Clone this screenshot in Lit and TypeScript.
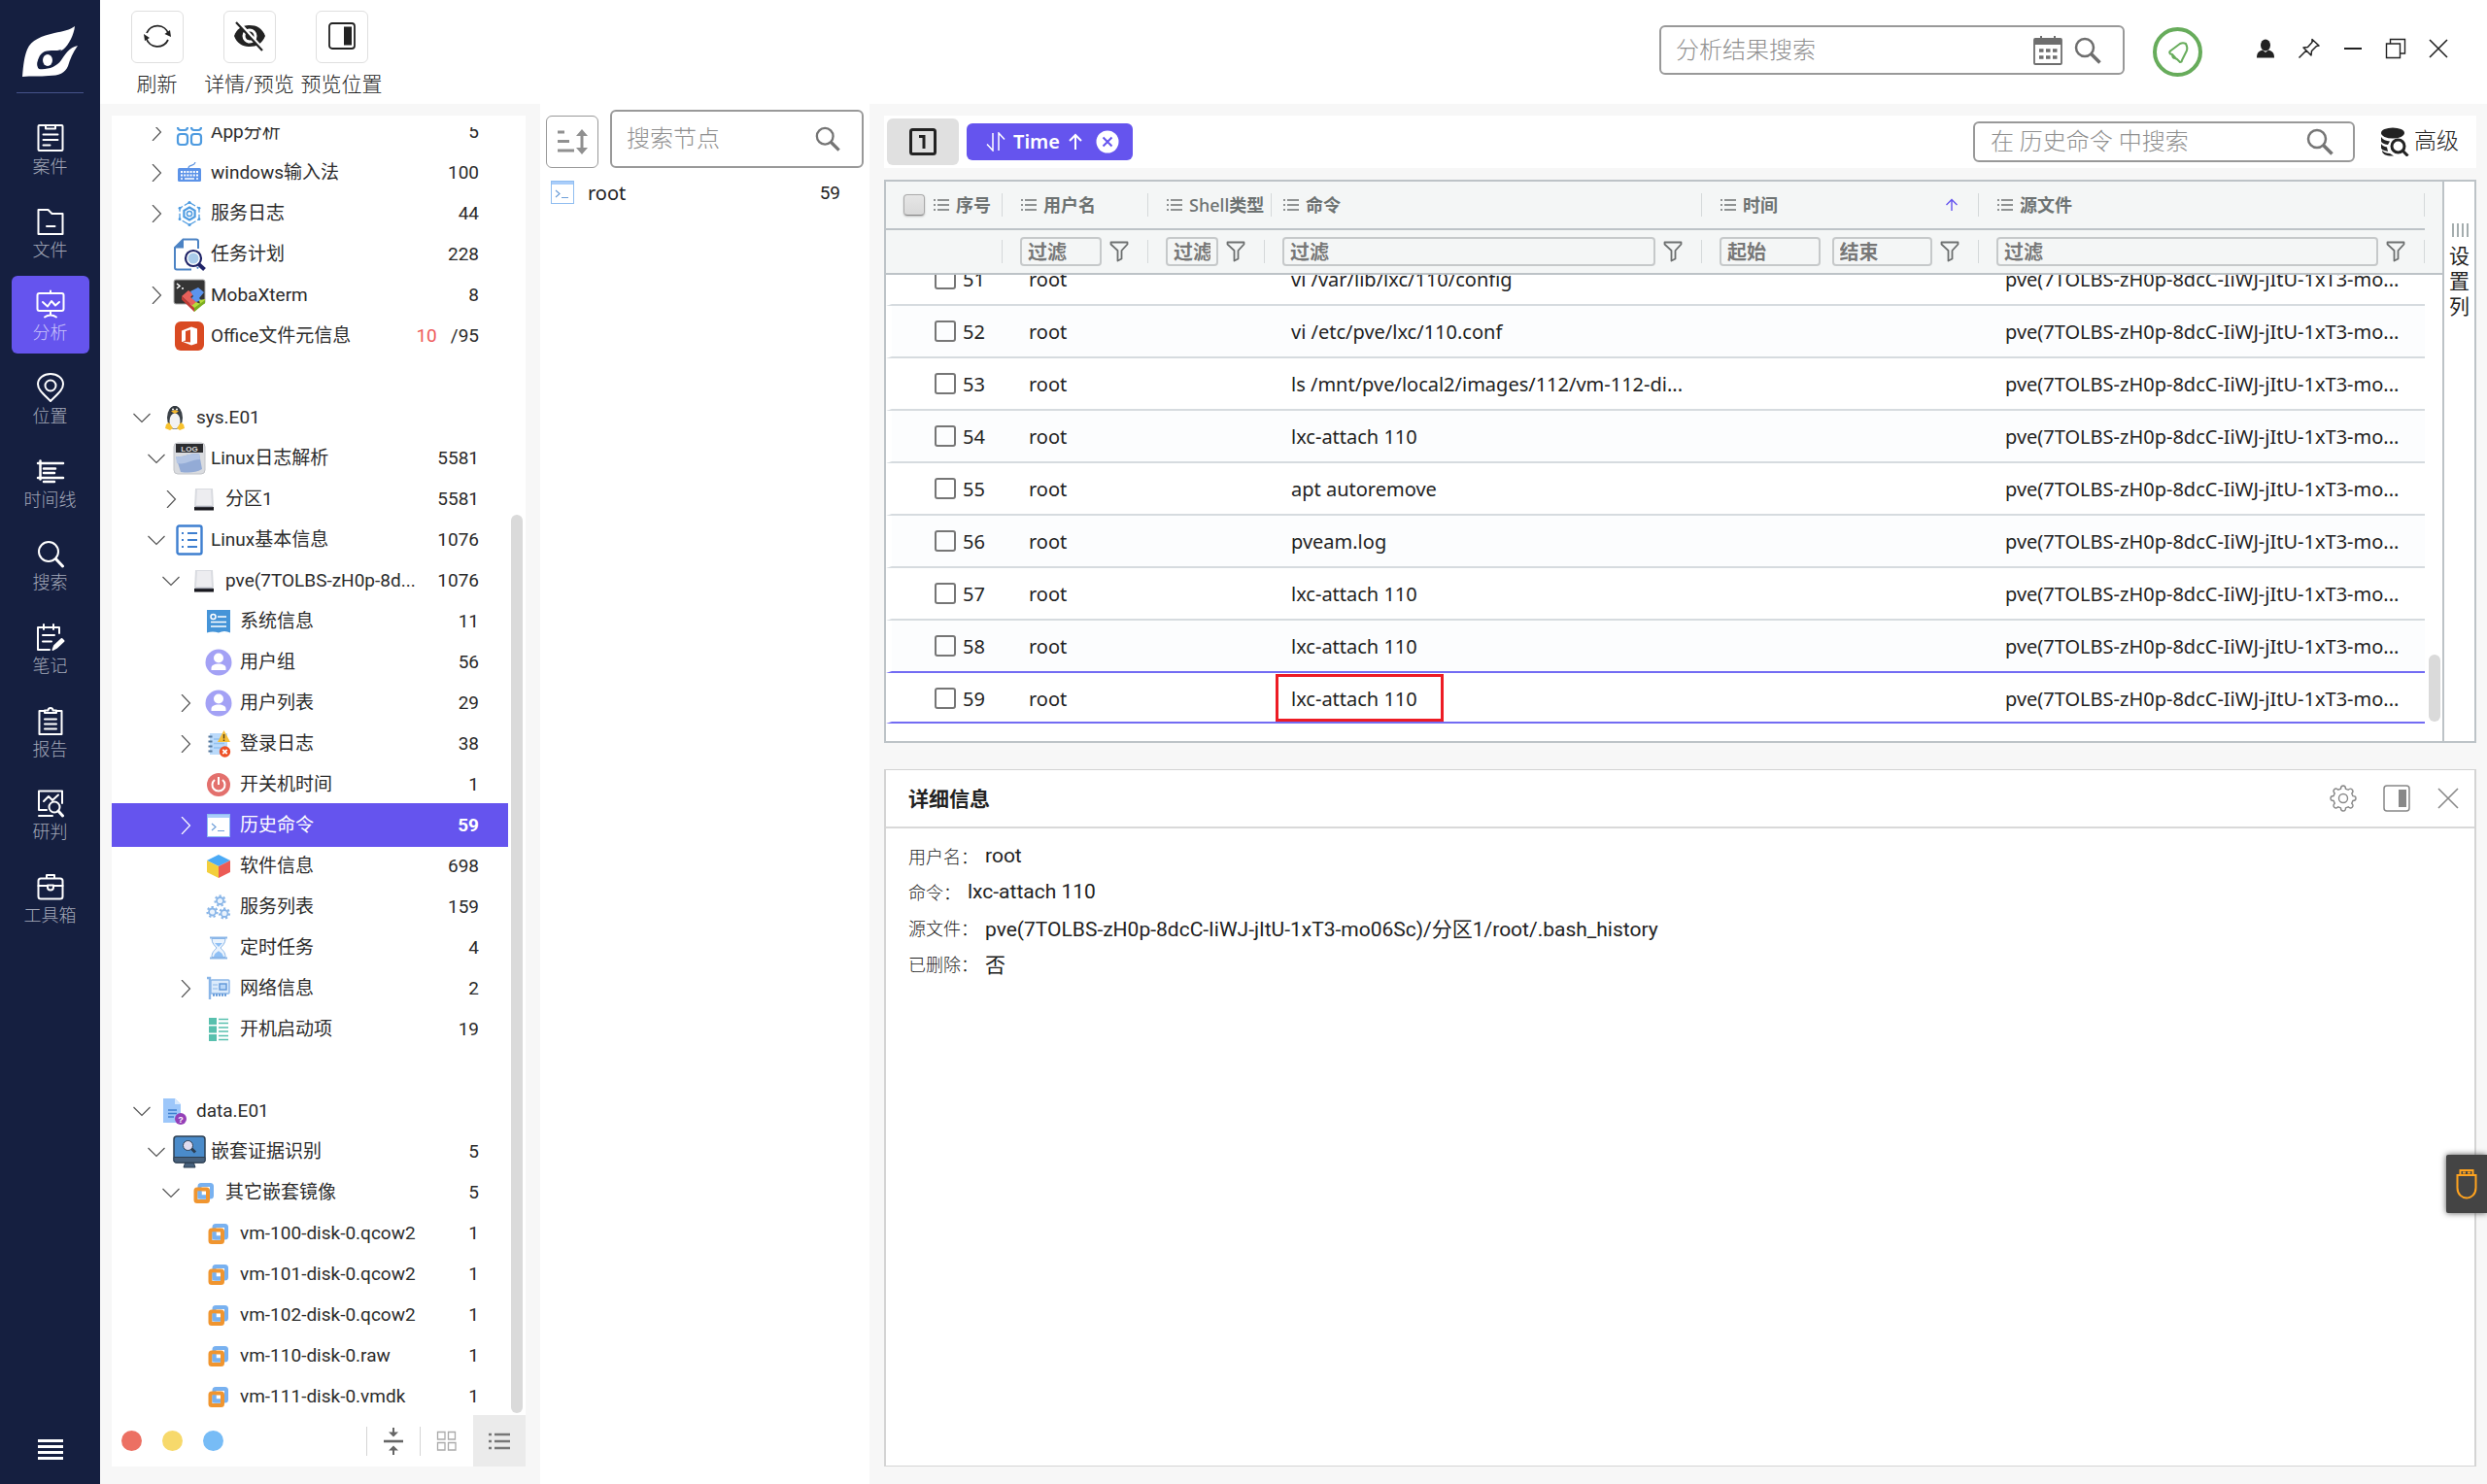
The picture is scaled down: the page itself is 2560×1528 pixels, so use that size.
import { LitElement, html, svg, css, nothing, TemplateResult } from "lit";
import { customElement } from "lit/decorators.js";
import { classMap } from "lit/directives/class-map.js";
import { styleMap } from "lit/directives/style-map.js";

const pic = (w: number, h: number, body: unknown, vb = `0 0 ${w} ${h}`) =>
  html`<svg width=${w} height=${h} viewBox=${vb} fill="none" aria-hidden="true">${body}</svg>`;

/* ---------- line icons of the navigation ---------- */
const line = (body: unknown) =>
  html`<svg width="30" height="30" viewBox="0 0 30 30" fill="none" stroke="#fff" stroke-width="2" stroke-linecap="round" stroke-linejoin="round" aria-hidden="true">${body}</svg>`;

const navIcons: Record<string, TemplateResult> = {
  cases: line(svg`<rect x="2.500" y="2" width="25" height="26" rx="1"/><path d="M10 2v3.500h10V2M7.500 11.500h15M7.500 17h15M7.500 22.500h7"/>`),
  files: line(svg`<path d="M2.500 28V3h10l4 4h11v21zM11 20h8.500"/>`),
  analysis: line(svg`<rect x="1.500" y="4" width="27" height="18" rx="2"/><path d="M15 1.500V4M15 22v4.500M9 28.500c2-1.500 4-2 6-2s4 .5 6 2M7 13l5 4.500 4-5.500 4 4.500 4-3.500"/>`),
  location: line(svg`<path d="M15 29C8 22 2 17.500 2 11.500a13 10.500 0 0 1 26 0C28 17.500 22 22 15 29z"/><circle cx="15" cy="13" r="5.500"/>`),
  timeline: line(svg`<path d="M4.500 4.500v19M2 7h26M8 12.500h12M8 17h11M2 22h26M8 26h11" stroke-width="2.500"/>`),
  search: line(svg`<circle cx="13" cy="13" r="10"/><path d="M20.500 20.500l7 7.500" stroke-width="3"/>`),
  notes: line(svg`<path d="M24 11V5H2v23h12M8 2v5M18 2v5M7 13h12M7 19.500h9"/><path d="M17.500 28l1.500-4 7.500-7 2 2-7.500 7z" fill="#fff"/>`),
  report: line(svg`<path d="M9 5H3.500v24h23V5H21M9 7h12V4.500h-3.500a2.500 2.500 0 0 0-5 0H9zM9 13.500h12M9 18.500h12M9 23.500h12"/>`),
  study: line(svg`<path d="M3 2.500h24V15M3 2.500V22h8M3 28h14M8 13l5-5 4 4 6-5.500"/><circle cx="19" cy="19" r="5.500"/><path d="M23 23l4.500 5" stroke-width="3"/>`),
  toolbox: line(svg`<rect x="2.500" y="6.500" width="25" height="21" rx="2.500"/><path d="M11 6V3h8v3M2.500 14h9.500M18 14h9.500"/><path d="M12 13.500h6v2a3 3 0 0 1-6 0z"/>`),
};

const logo = pic(60, 54, svg`
  <path fill="#fff" d="M1 53C2 41 3 32 6 25 10 15 21 11 34 8 43 6 50 5 55 1 54 10 49 20 43 25 35 30 26 25 19 33 15 38 16 42 18 45 27 46 36 43 41 36 45 30 49 23 58 21 53 28 50 35 48 42 45 49 39 52 28 52 19 53 10 52 1 53z"/>
  <path fill="#151f40" d="M17 44C16 36 18 30 24 27c6-2 12 0 17-2-2 4-5 6-6 11-2 6-9 9-18 8z"/>
  <ellipse cx="27" cy="36" rx="5" ry="6" fill="#fff"/>`);

/* ---------- shared glyphs ---------- */
const magnifier = (s: number, c = "#757575") =>
  html`<svg width=${s} height=${s} viewBox="0 0 28 28" fill="none" stroke=${c} aria-hidden="true"><circle cx="11" cy="11" r="9" stroke-width="2.500"/><path d="M17.500 17.500l9 9" stroke-width="3.500"/></svg>`;
const splitView = (c: string) => pic(28, 28, svg`<rect x="1" y="1" width="26" height="26" rx="3" stroke=${c} stroke-width="1.500"/><path d="M16 5h8v18h-8z" fill=${c}/>`);
const funnel = pic(20, 22, svg`<path d="M1.500 1.500h17v2L12.500 10v8.500l-4 2V10L1.500 3.500z" stroke="#6d7070" stroke-width="1.800" stroke-linejoin="round"/>`);
const menuGlyph = pic(16, 14, svg`<path d="M4 2h12M4 7h12M4 12h12M0 2h2M0 7h2M0 12h2" stroke="#6d7272" stroke-width="1.600"/>`);
const chevronRight = pic(18, 18, svg`<path d="M5 0l8.500 9L5 18" stroke="currentColor" stroke-width="1.200"/>`);
const chevronDown = pic(18, 18, svg`<path d="M.5 5l8.500 8.500L17.500 5" stroke="currentColor" stroke-width="1.200"/>`);
const terminal = pic(24, 24, svg`<rect x=".5" y=".5" width="23" height="23" fill="#fff" stroke="#8fbdf0"/><path d="M1 1h22v3H1z" fill="#a9cdfa"/><path d="M5 10l4 3.500L5 17M11 17.500h7" stroke="#6e9fd8" stroke-width="1.200"/>`);
const user = pic(28, 28, svg`<circle cx="14" cy="14" r="13.500" fill="#a3a1f5"/><circle cx="14" cy="9.500" r="5" fill="#fff"/><path d="M6.500 22v-2c0-3 3-4.500 7.500-4.500s7.500 1.500 7.500 4.500v2z" fill="#fff"/>`);
const disk = pic(24, 26, svg`<path d="M3 2h18l1 19H2z" fill="#d9dbe0"/><path d="M5 3h14l1 16H4z" fill="#ededf0"/><path d="M2 21h20v3.500H2z" fill="#17171d"/><path d="M3 20h18v1.200H3z" fill="#a9abb6"/>`);
const vm = pic(22, 24, svg`<rect x="6.500" y="4" width="12.500" height="12.500" rx="1.500" stroke="#78b1f0" stroke-width="4"/><rect x="2.500" y="8.500" width="12.500" height="12.500" rx="1.500" stroke="#f0952f" stroke-width="4"/><path d="M6.500 10.500v6H13" stroke="#78b1f0" stroke-width="4"/>`);

const treeIcons: Record<string, TemplateResult> = {
  app: pic(28, 30, svg`<g stroke="#4e9be0" stroke-width="2.200"><rect x="2" y="2" width="10" height="11" rx="3"/><rect x="16" y="2" width="10" height="11" rx="3"/><rect x="2" y="17" width="10" height="11" rx="3"/><rect x="16" y="17" width="10" height="11" rx="3"/></g>`),
  keyboard: pic(26, 24, svg`<path d="M12 7c0-4 6-1 7-6" stroke="#5c93e0" stroke-width="1.200"/><rect x="1" y="7" width="24" height="14" rx="1.500" fill="#5c93e8"/><path d="M4 11h18M4 14.500h18" stroke="#fff" stroke-width="2" stroke-dasharray="2 1.200"/><path d="M4 18h2M8 18h10M20 18h2" stroke="#fff" stroke-width="1.600"/>`),
  service: pic(26, 28, svg`<g stroke="#4e9be0"><path d="M13 2.500l10 5.800v11.400L13 25.500 3 19.700V8.300z" stroke-width="1.300" stroke-dasharray="7 2"/><path d="M13 7.500l5.600 3.300v6.400L13 20.500l-5.600-3.300v-6.400z" stroke-width="2.200"/><circle cx="13" cy="14" r="2.600" stroke-width="1.500"/></g><g fill="#4e9be0"><circle cx="13" cy="2.500" r="1.600"/><circle cx="23" cy="8.300" r="1.400"/><circle cx="23" cy="19.700" r="1.400"/><circle cx="13" cy="25.500" r="1.600"/><circle cx="3" cy="8.300" r="1.400"/><circle cx="3" cy="19.700" r="1.400"/></g>`),
  task: pic(34, 34, svg`<path d="M26 11V3.500q0-2-2-2H10.500L2 10v20.500q0 2 2 2h15M25 31.500l1-1.500" stroke="#4c83c4" stroke-width="2"/><path d="M11 1v9.500H2z" fill="#4c83c4"/><circle cx="21" cy="21" r="9.500" fill="#fff"/><circle cx="21" cy="21" r="5.500" fill="#a9cbea"/><circle cx="21" cy="21" r="8" stroke="#1f2468" stroke-width="2.200"/><path d="M26.500 27l6 5.500" stroke="#1f2468" stroke-width="4"/>`),
  moba: pic(34, 34, svg`<rect x="1" y="1" width="32" height="25" rx="2" fill="#353535" stroke="#b0b0b0"/><path d="M4 5l3 2.500L4 10M9 10h2" stroke="#fff" stroke-width="1.500"/><path d="M9 18l7-6 5 4-3 3 7 5-5 4z" fill="#e8605a"/><path d="M18 13l8-4 6 5-5 6 2 2-5 2-5-4 2-2z" fill="#5b94ec"/><path d="M19 28l5-4 4 2-1-4 6-1v3L22 34z" fill="#b5dd3a"/><path d="M9 18v3.500L22 34v-4z" fill="#c23b35"/><path d="M33 22v3L22 34v-4z" fill="#7cae20"/>`),
  office: pic(30, 30, svg`<rect width="30" height="30" rx="6" fill="#d94a22"/><path fill="#fff" fill-rule="evenodd" d="M7 9.500l10-4 6 2v15l-6 2-10-4 9 1V8.500L11 10v9.500l-4 1.500z"/>`),
  linux: pic(22, 26, svg`<ellipse cx="11" cy="13" rx="8" ry="12" fill="#3c4248"/><circle cx="11" cy="6" r="5" fill="#33393f"/><ellipse cx="11" cy="16.500" rx="5.500" ry="8" fill="#f2f2f2"/><path d="M7 6.500l4-1.500 4 1.500-4 2.500z" fill="#f5b82e"/><circle cx="9" cy="4.500" r="1" fill="#fff"/><circle cx="13" cy="4.500" r="1" fill="#fff"/><path d="M1 24l1-4 3-2 4 6-3 2z" fill="#f8c22e"/><path d="M21 24l-1-4-3-2-4 6 3 2z" fill="#f8c22e"/>`),
  log: pic(34, 34, svg`<rect x="1" y="1" width="32" height="32" rx="4" fill="#d9dbdf" stroke="#c2c4c8"/><path d="M3 2h28v9H3z" fill="#2c2d30"/><text x="17" y="9.500" text-anchor="middle" font-family="Liberation Sans, sans-serif" font-size="8" font-weight="bold" fill="#ddd">LOG</text><path d="M3 15c9 1 11-3 24-3l3 16c-7 4-14 4-22 3z" fill="#93abd6"/><path d="M3 15c9 1 11-3 24-3l1 6c-10 0-14 6-24 4z" fill="#b3c5e4"/>`),
  disk,
  basic: pic(28, 32, svg`<rect x="1.500" y="1.500" width="25" height="29" rx="2" stroke="#3e7fd0" stroke-width="2.400"/><path d="M6 9h2M6 16h2M6 23h2M12 9h10M12 16h10M12 23h10" stroke="#3e7fd0" stroke-width="2"/>`),
  system: pic(24, 24, svg`<path d="M0 0h24v23.500q-6-3-12 0-6-2-12 0z" fill="#4594d8"/><circle cx="6.500" cy="7" r="2.500" stroke="#fff" stroke-width="1.500"/><path d="M11 7h9M4 12.500h16M4 17h16" stroke="#fff" stroke-width="1.600"/>`),
  user,
  login: pic(26, 28, svg`<path d="M4 3h18v22H4z" fill="#badafb"/><path d="M8 9h11M8 13.500h11M8 18h8" stroke="#93c1f0" stroke-width="1.500"/><path d="M2.500 6.500h4M2.500 11.500h4M2.500 16.500h4M2.500 21.500h4" stroke="#54779c" stroke-width="1.800"/><path d="M18.500 0l6.500 12H12z" fill="#f6bf3a"/><path d="M18.500 4v4.500M18.500 9.500v1.500" stroke="#5b4513" stroke-width="1.500"/><circle cx="19.500" cy="22" r="5.700" fill="#ee5126"/><path d="M17.300 19.800l4.400 4.400m0-4.400l-4.400 4.400" stroke="#fff" stroke-width="1.800"/>`),
  power: pic(24, 24, svg`<circle cx="12" cy="12" r="12" fill="#e3706d"/><path d="M8 7a6.500 6.500 0 1 0 8 0M12 4v8" stroke="#fff" stroke-width="2"/>`),
  terminal,
  cube: pic(24, 26, svg`<path d="M12 1l12 6-12 6L0 7z" fill="#4baaf5"/><path d="M0 7l12 6v12L0 19z" fill="#f3cf3c"/><path d="M24 7l-12 6v12l12-6z" fill="#ec5b55"/>`),
  gears: pic(26, 26, svg`<g stroke="#8ab6e8" stroke-width="2.200" stroke-dasharray="2.200 2.200"><circle cx="14.500" cy="6.500" r="5"/><circle cx="6.500" cy="18" r="5"/><circle cx="19" cy="19.500" r="5"/></g><g stroke="#8ab6e8" stroke-width="1.800" fill="#eaf3fd"><circle cx="14.500" cy="6.500" r="3.500"/><circle cx="6.500" cy="18" r="3.500"/><circle cx="19" cy="19.500" r="3.500"/></g>`),
  hourglass: pic(22, 24, svg`<path d="M2 1.500h18M2 22.500h18" stroke="#8ab6e8" stroke-width="2"/><path d="M4 2.500c0 5 3 7 5 9.500-2 2.500-5 4-5 9.500h14c0-5.500-3-7-5-9.500 2-2.500 5-4.500 5-9.500z" fill="#eaf3fd" stroke="#8ab6e8"/><path d="M6 21c1-4 3-4 5-6 2 2 4 2 5 6zM7 7h8l-4 4z" fill="#8fc0f5"/>`),
  network: pic(26, 26, svg`<path d="M1 2h3v22" stroke="#8ab6e8" stroke-width="2.400"/><rect x="5" y="4" width="19" height="14" rx="1" fill="#dcebfb" stroke="#8ab6e8" stroke-width="1.400"/><rect x="14" y="8" width="7" height="6" fill="#b9d7f8" stroke="#5f96d8" stroke-width="1.400"/><path d="M7 9h5M7 13h5" stroke="#8ab6e8"/><path d="M7 19.500h14" stroke="#5f96d8" stroke-width="2.500" stroke-dasharray="2 1"/>`),
  startup: pic(22, 26, svg`<path d="M1 1h8v7H1zM1 9.500h8v7H1zM1 18h8v7H1z" fill="#58c0ae"/><path d="M11 2.500h10M11 6.500h10M11 11h10M11 15h10M11 19.500h10M11 23.500h10" stroke="#58c0ae" stroke-width="1.300"/>`),
  file: pic(26, 28, svg`<path d="M1 1h12l6 6v19H1z" fill="#9dc7fa"/><path d="M13 1l6 6h-6z" fill="#d9eafd"/><path d="M6 13h9M6 16.500h9M6 20h6" stroke="#3e7fd0" stroke-width="1.500"/><circle cx="19" cy="22" r="6" fill="#9440b8"/><text x="19" y="25.500" text-anchor="middle" font-family="Liberation Sans, sans-serif" font-size="9" font-weight="bold" fill="#fff">?</text>`),
  monitor: pic(34, 34, svg`<path d="M13 27h8l2 6H11z" fill="#47607b" stroke="#2d3f52"/><rect x="1" y="1" width="32" height="27" rx="3" fill="#4a8bca" stroke="#2d3f52" stroke-width="1.500"/><path d="M1 22.500h32V26q0 2-2 2H3q-2 0-2-2z" fill="#47607b" stroke="#2d3f52"/><path d="M18.500 13l4.500 4.500" stroke="#2d3f52" stroke-width="3"/><circle cx="15.500" cy="10.500" r="5" fill="#e0dcf0" stroke="#2d3f52"/>`),
  vm,
};

type Node = { level: number; open?: boolean | null; icon: string; text: string; count?: string; hits?: string; selected?: boolean } | null;
const n = (level: number, open: boolean | null, icon: string, text: string, count?: string, extra = {}): Node => ({ level, open, icon, text, count, ...extra });

const tree: Node[] = [
  n(1, false, "app", "App分析", "5"),
  n(1, false, "keyboard", "windows输入法", "100"),
  n(1, false, "service", "服务日志", "44"),
  n(1, null, "task", "任务计划", "228"),
  n(1, false, "moba", "MobaXterm", "8"),
  n(1, null, "office", "Office文件元信息", "/95", { hits: "10" }),
  null,
  n(0, true, "linux", "sys.E01"),
  n(1, true, "log", "Linux日志解析", "5581"),
  n(2, false, "disk", "分区1", "5581"),
  n(1, true, "basic", "Linux基本信息", "1076"),
  n(2, true, "disk", "pve(7TOLBS-zH0p-8d...", "1076"),
  n(3, null, "system", "系统信息", "11"),
  n(3, null, "user", "用户组", "56"),
  n(3, false, "user", "用户列表", "29"),
  n(3, false, "login", "登录日志", "38"),
  n(3, null, "power", "开关机时间", "1"),
  n(3, false, "terminal", "历史命令", "59", { selected: true }),
  n(3, null, "cube", "软件信息", "698"),
  n(3, null, "gears", "服务列表", "159"),
  n(3, null, "hourglass", "定时任务", "4"),
  n(3, false, "network", "网络信息", "2"),
  n(3, null, "startup", "开机启动项", "19"),
  null,
  n(0, true, "file", "data.E01"),
  n(1, true, "monitor", "嵌套证据识别", "5"),
  n(2, true, "vm", "其它嵌套镜像", "5"),
  n(3, null, "vm", "vm-100-disk-0.qcow2", "1"),
  n(3, null, "vm", "vm-101-disk-0.qcow2", "1"),
  n(3, null, "vm", "vm-102-disk-0.qcow2", "1"),
  n(3, null, "vm", "vm-110-disk-0.raw", "1"),
  n(3, null, "vm", "vm-111-disk-0.vmdk", "1"),
];

const nav = [
  ["cases", "案件"], ["files", "文件"], ["analysis", "分析"], ["location", "位置"], ["timeline", "时间线"],
  ["search", "搜索"], ["notes", "笔记"], ["report", "报告"], ["study", "研判"], ["toolbox", "工具箱"],
];

const source = "pve(7TOLBS-zH0p-8dcC-IiWJ-jItU-1xT3-mo...";
const commands: [number, string][] = [
  [51, "vi /var/lib/lxc/110/config"],
  [52, "vi /etc/pve/lxc/110.conf"],
  [53, "ls /mnt/pve/local2/images/112/vm-112-di..."],
  [54, "lxc-attach 110"],
  [55, "apt autoremove"],
  [56, "pveam.log"],
  [57, "lxc-attach 110"],
  [58, "lxc-attach 110"],
  [59, "lxc-attach 110"],
];

const base = css`
  :host { box-sizing: border-box; font-family: Roboto, "Noto Sans CJK SC", sans-serif; color: #222; }
  *, *::before, *::after { box-sizing: border-box; }
  button { font: inherit; color: inherit; background: none; border: 0; padding: 0; margin: 0; }
  svg { display: block; flex: none; }
  input { font: inherit; }
`;

@customElement("nav-rail")
class NavRail extends LitElement {
  static styles = [base, css`
    :host { display: flex; flex-direction: column; align-items: center; flex: none; width: 103px; background: #151f40; padding: 26px 0 24px; }
    .rule { width: 69px; height: 1px; background: #46528a; margin: 15px 0 17px; }
    nav { display: flex; flex-direction: column; justify-content: space-between; min-height: 851px; }
    .item { display: flex; flex-direction: column; align-items: center; width: 80px; height: 80px; padding-top: 14px; gap: 1px; border-radius: 6px; color: #a3a8b8; font-size: 18px; line-height: 28px; font-weight: 300; }
    .item.active { background: #6554ee; color: #c9c3fa; }
    .menu { margin-top: auto; }
  `];
  render() {
    return html`${logo}<div class="rule"></div>
      <nav>${nav.map(([k, t]) => html`<button class=${classMap({ item: true, active: k === "analysis" })}>${navIcons[k]}<span>${t}</span></button>`)}</nav>
      <button class="menu" aria-label="菜单">${pic(26, 22, svg`<path d="M0 1.500h26M0 7.500h26M0 13.500h26M0 19.500h26" stroke="#fff" stroke-width="3"/>`)}</button>`;
  }
}

@customElement("top-bar")
class TopBar extends LitElement {
  static styles = [base, css`
    :host { display: flex; align-items: flex-start; height: 107px; flex: none; background: #fff; padding: 0 38px 0 11px; }
    .tool { display: flex; flex-direction: column; align-items: center; width: 95px; padding-top: 11px; gap: 7px; font-size: 21px; line-height: 30px; font-weight: 300; white-space: nowrap; }
    .box { display: flex; align-items: center; justify-content: center; width: 54px; height: 54px; padding-bottom: 2px; border: 1px solid #dfdfdf; border-radius: 6px; }
    .search { display: flex; align-items: center; width: 479px; height: 51px; margin: 26px 29px 0 auto; border: 2px solid #999; border-radius: 6px; padding: 0 22px 0 15px; gap: 12px; }
    .search input { flex: 1; min-width: 0; border: 0; outline: 0; padding: 0; background: none; font-size: 24px; font-weight: 300; }
    input::placeholder { color: #8f8f8f; opacity: 1; }
    .bell { display: flex; align-items: center; justify-content: center; width: 51px; height: 51px; margin: 28px 53px 0 0; border: 4px solid #67ac5b; border-radius: 50%; }
    .window { display: flex; align-items: center; gap: 20px; margin-top: 38px; }
  `];
  render() {
    return html`
      <button class="tool"><span class="box">${pic(30, 30, svg`<path d="M4 12A12 12 0 0 1 26.500 13M26 19a12 12 0 0 1-22.500-2" stroke="#222" stroke-width="1.800"/><path d="M29 16l-1-7-5.500 4zM1 13l1 7 5-3z" fill="#222"/>`)}</span><span>刷新</span></button>
      <button class="tool"><span class="box">${pic(34, 32, svg`<path d="M1 16C4 8 10 5 17 5s13 3 16 11c-3 8-9 11-16 11S4 24 1 16z" fill="#222"/><circle cx="17" cy="16" r="6" stroke="#fff" stroke-width="3"/><circle cx="17" cy="16" r="3" fill="#222"/><path d="M5 1l26 29" stroke="#fff" stroke-width="3"/><path d="M3 2l27 29" stroke="#222" stroke-width="2.200"/>`)}</span><span>详情/预览</span></button>
      <button class="tool"><span class="box">${pic(28, 28, svg`<rect x="1" y="1" width="26" height="26" rx="3" stroke="#222" stroke-width="1.800"/><path d="M16 4.500h8v19h-8z" fill="#222"/>`)}</span><span>预览位置</span></button>
      <label class="search"><input aria-label="分析结果搜索" placeholder="分析结果搜索" />
        ${pic(30, 30, svg`<path d="M2 3h26q1 0 1 1v24q0 1-1 1H2q-1 0-1-1V4q0-1 1-1z" stroke="#6e6e6e" stroke-width="1.800"/><path d="M1 3h28v6H1zM7 0h2v4H7zM21 0h2v4h-2z" fill="#6e6e6e"/><path d="M6 15h4.500M13 15h4.500M20 15h4.500M6 22h4.500M13 22h4.500M20 22h4.500" stroke="#6e6e6e" stroke-width="3.500"/>`)}
        ${magnifier(28, "#6e6e6e")}</label>
      <button class="bell" aria-label="通知">${pic(24, 24, svg`<path d="M20 3c-2-1-4-1-6 0L4 10.500c-1 1-1 2 0 3l2 .5c0 3 1 4 3 4l2 1 3 3c1 0 2-1 2-2l5-10c1-3 0-5-1-7zM6 14l4 4.500" stroke="#67ac5b" stroke-width="2" stroke-linejoin="round"/>`)}</button>
      <div class="window">
        <button aria-label="用户">${pic(24, 24, svg`<ellipse cx="12" cy="8.500" rx="5" ry="6" fill="#222"/><path d="M3 21.500c0-5 2-7 6-8l3 2.500 3-2.500c4 1 6 3 6 8z" fill="#222"/>`)}</button>
        <button aria-label="置顶">${pic(26, 24, svg`<path d="M16 2.500l7 6.500-2.500.5-5 5-.5 4.500-8-8 4.500-.5 4.500-5zM10 14l-7.500 7.500" stroke="#222" stroke-width="1.500" stroke-linejoin="round"/>`)}</button>
        <button aria-label="最小化">${pic(24, 24, svg`<path d="M3 12h18" stroke="#222" stroke-width="2"/>`)}</button>
        <button aria-label="还原">${pic(24, 24, svg`<path d="M2.500 7h14v14.500h-14zM6.500 7V2.500h15V17h-5" stroke="#222" stroke-width="1.400"/>`)}</button>
        <button aria-label="关闭">${pic(24, 24, svg`<path d="M3 3l18 18M21 3L3 21" stroke="#222" stroke-width="1.600"/>`)}</button>
      </div>`;
  }
}

@customElement("evidence-tree")
class EvidenceTree extends LitElement {
  static styles = [base, css`
    :host { display: flex; flex-direction: column; flex: none; width: 426px; margin: 12px 15px 18px 12px; padding-top: 12px; background: #fff; }
    .scroll { display: flex; flex: 1; min-height: 0; overflow: hidden; }
    .rows { flex: 1; margin-top: -16px; min-width: 0; }
    .row { display: flex; align-items: center; width: 100%; height: 42px; padding: 0 30px 0 22px; font-size: 19px; line-height: 26px; text-align: left; white-space: nowrap; color: #2b2b2b; }
    .row.selected { height: 45px; margin: -2px 0 -1px; background: #6554ee; color: #fff; }
    .arrow { width: 18px; height: 18px; margin-right: 8px; color: #555; flex: none; }
    .selected .arrow { color: #fff; }
    .icon { display: flex; align-items: center; justify-content: center; width: 34px; margin-right: 5px; flex: none; }
    .text { flex: 1; min-width: 0; }
    .selected .count { font-weight: 700; }
    .hits { color: #ee5a5a; margin-right: 14px; }
    .track { display: flex; width: 18px; flex: none; padding: 399px 3px 2px 3px; }
    .thumb { flex: 1; border-radius: 6px; background: #dadada; }
    .foot { display: flex; align-items: center; flex: none; height: 53px; padding-left: 10px; gap: 21px; }
    .dot { width: 21px; height: 21px; border-radius: 50%; }
    .red { background: #ec7063; } .yellow { background: #f7d96b; } .blue { background: #77bcf6; }
    .tools { display: flex; align-items: center; align-self: stretch; margin-left: auto; }
    .tools button { display: flex; align-items: center; justify-content: center; width: 54px; align-self: stretch; }
    .tools i { width: 1px; height: 30px; background: #d5d5d5; }
    .tools .on { background: #ebebeb; }
  `];
  private row(d: Node) {
    if (!d) return html`<div class="row"></div>`;
    return html`<button class=${classMap({ row: true, selected: !!d.selected })}>
      <span style=${styleMap({ width: `${d.level * 15}px` })}></span>
      <span class="arrow">${d.open === null ? nothing : d.open ? chevronDown : chevronRight}</span>
      <span class="icon">${treeIcons[d.icon]}</span>
      <span class="text">${d.text}</span>
      ${d.hits ? html`<span class="hits">${d.hits}</span>` : nothing}
      <span class="count">${d.count ?? ""}</span>
    </button>`;
  }
  render() {
    return html`
      <div class="scroll"><div class="rows">${tree.map((d) => this.row(d))}</div><div class="track"><div class="thumb"></div></div></div>
      <div class="foot">
        <button class="dot red" aria-label="红色标记"></button><button class="dot yellow" aria-label="黄色标记"></button><button class="dot blue" aria-label="蓝色标记"></button>
        <div class="tools"><i></i>
          <button aria-label="全部折叠">${pic(22, 30, svg`<path d="M1 15h20" stroke="#666" stroke-width="2.600"/><path d="M11 1v6M11 29v-6" stroke="#666" stroke-width="2"/><path d="M6 5.500h10l-5 5zM6 24.500h10l-5-5z" fill="#666"/>`)}</button><i></i>
          <button aria-label="网格视图">${pic(22, 22, svg`<path d="M1.500 1.500h7.500v7.500H1.500zM12.500 1.500h7v7.500h-7zM1.500 12.500h7.500V20H1.500zM12.500 12.500H20V20h-7.500z" stroke="#aaa" stroke-width="1.300"/>`)}</button>
          <button class="on" aria-label="列表视图">${pic(22, 18, svg`<path d="M6 2h16M6 9h16M6 16h16M0 2h3M0 9h3M0 16h3" stroke="#777" stroke-width="2.600"/>`)}</button>
        </div>
      </div>`;
  }
}

@customElement("node-list")
class NodePanel extends LitElement {
  static styles = [base, css`
    :host { display: block; flex: none; width: 339px; background: #fff; padding: 6px 6px 0; }
    .bar { display: flex; align-items: flex-end; gap: 12px; }
    .sort { display: flex; align-items: center; justify-content: center; width: 54px; height: 54px; border: 1px solid #999; border-radius: 6px; }
    .search { display: flex; align-items: center; flex: 1; min-width: 0; height: 60px; border: 2px solid #999; border-radius: 6px; padding: 0 22px 0 15px; }
    input { flex: 1; min-width: 0; border: 0; outline: 0; padding: 0; font-size: 24px; font-weight: 300; }
    input::placeholder { color: #8f8f8f; opacity: 1; }
    .node { display: flex; align-items: center; width: 100%; height: 42px; margin-top: 4px; padding: 0 24px 0 5px; gap: 14px; font-size: 20px; }
    .name { font-family: "Noto Sans", sans-serif; flex: 1; text-align: left; }
    .count { font-size: 19px; }
  `];
  render() {
    return html`<div class="bar"><button class="sort" aria-label="排序">${pic(34, 30, svg`<path d="M2 5h7M2 14.500h12M2 24h17" stroke="#909090" stroke-width="3"/><path d="M27 7v16" stroke="#909090" stroke-width="3"/><path d="M21 9l6-7 6 7zM21 21l6 7 6-7z" fill="#909090"/>`)}</button>
      <label class="search"><input aria-label="搜索节点" placeholder="搜索节点" />${magnifier(26)}</label></div>
      <button class="node">${terminal}<span class="name">root</span><span class="count">59</span></button>`;
  }
}

@customElement("result-grid")
class ResultGrid extends LitElement {
  static styles = [base, css`
    :host { display: flex; flex: none; border: 2px solid #bdc3c7; background: #fff; font-family: "Noto Sans", "Noto Sans CJK SC", sans-serif; }
    .main { flex: 1; min-width: 0; padding-bottom: 18px; }
    table { width: 100%; table-layout: fixed; border-collapse: separate; border-spacing: 0; }
    col.c1 { width: 120px; } col.c2 { width: 150px; } col.c3 { width: 120px; } col.c4 { width: 450px; } col.c5 { width: 285px; }
    th, td { padding: 0; font-weight: normal; text-align: left; }
    th { background: #f4f6f6; border-bottom: 2px solid #bdc3c7; color: #6d7272; }
    .head { display: flex; align-items: center; height: 48px; padding-left: 19px; gap: 7px; font-size: 18px; line-height: 24px; font-weight: 700; white-space: nowrap; }
    .latin { font-weight: 500; }
    .filter { display: flex; align-items: center; height: 44px; padding-left: 18px; gap: 8px; }
    .sep { width: 1px; height: 24px; margin-left: auto; background: #d5d9da; flex: none; }
    .head .sort { margin-left: auto; }
    .head .sort + .sep { margin-left: 13px; }
    .all { appearance: none; width: 22px; height: 22px; margin: 0 2px 0 -1px; border: 1px solid #aaa; border-bottom-color: #888; border-radius: 4px; background: linear-gradient(#e6e6e6, #d9d9d9); box-shadow: 0 1px 2px #bbb; flex: none; }
    .field { flex: 1; min-width: 0; width: 40px; height: 30px; padding: 0 6px; border: 2px solid #c6c9ca; border-radius: 4px; background: #f4f6f6; font-size: 20px; font-weight: 700; outline: 0; }
    .field::placeholder { color: #777; opacity: 1; }
    .field + .field { margin-left: 4px; }
    .filter .sep { margin-left: 11px; }
    .filter .only { margin-left: auto; }
    td { border-bottom: 2px solid #d6dbdf; }
    td:first-child { border-left: 6px solid transparent; background-clip: padding-box; }
    tr.alt td { background-color: #fcfdfe; }
    tr.before td, tr.current td { border-bottom-color: #736cf3; }
    .clip { display: flex; align-items: flex-end; overflow: hidden; height: 52px; }
    .cut .clip { height: 30px; }
    .current .clip { height: 50px; position: relative; }
    .cell { display: flex; align-items: center; flex: 1; min-width: 0; height: 52px; padding: 2px 0 0 27px; font-size: 20px; line-height: 28px; color: #222; white-space: nowrap; }
    .current .cell { height: 52px; }
    .cell.num { padding: 0 0 0 44px; gap: 7px; }
    .num span { padding-top: 2px; }
    .current .clip { align-items: flex-start; }
    .check { appearance: none; width: 22px; height: 22px; margin: 0; border: 2px solid #767676; border-radius: 3px; flex: none; }
    .mark { position: absolute; left: 11px; top: 1px; width: 173px; height: 49px; border: 3px solid #ed1c24; }
    .gutter { display: flex; flex-direction: column; width: 18px; flex: none; }
    .cap { height: 96px; background: #f4f6f6; border-bottom: 2px solid #bdc3c7; }
    .thumb { width: 12px; height: 69px; margin: auto 0 20px 4px; border-radius: 6px; background: #dadada; }
    .columns { display: flex; flex-direction: column; align-items: center; width: 33px; flex: none; border-left: 2px solid #bdc3c7; padding-top: 43px; line-height: 26px; }
    .columns button { display: flex; flex-direction: column; align-items: center; gap: 6px; width: 22px; font-size: 21px; }
  `];
  private head(t: unknown, end: unknown = nothing) {
    return html`<th><div class="head">${menuGlyph}<span>${t}</span>${end}<i class="sep"></i></div></th>`;
  }
  private filter(labels: string[], col: string) {
    return html`<th><div class="filter">${labels.map((l) => html`<input class="field" placeholder=${l} aria-label=${col + l} />`)}${funnel}<i class="sep"></i></div></th>`;
  }
  render() {
    return html`
      <div class="main"><table>
        <colgroup><col class="c1" /><col class="c2" /><col class="c3" /><col class="c4" /><col class="c5" /><col /></colgroup>
        <thead>
          <tr>
            <th><div class="head"><input type="checkbox" class="all" aria-label="全选" />${menuGlyph}<span>序号</span><i class="sep"></i></div></th>
            ${this.head("用户名")}${this.head(html`<span class="latin">Shell</span>类型`)}${this.head("命令")}
            ${this.head("时间", html`<span class="sort">${pic(14, 14, svg`<path d="M7 1.500V13M1.500 7L7 1.500 12.500 7" stroke="#6554ee" stroke-width="1.400"/>`)}</span>`)}
            ${this.head("源文件")}
          </tr>
          <tr>
            <th><div class="filter"><i class="sep only"></i></div></th>
            ${this.filter(["过滤"], "用户名")}${this.filter(["过滤"], "Shell类型")}${this.filter(["过滤"], "命令")}${this.filter(["起始", "结束"], "时间")}${this.filter(["过滤"], "源文件")}
          </tr>
        </thead>
        <tbody>${commands.map(([id, cmd], i) => html`
          <tr class=${classMap({ cut: i === 0, alt: id % 2 === 0, before: id === 58, current: id === 59 })}>
            <td><div class="clip"><label class="cell num"><input type="checkbox" class="check" /><span>${id}</span></label></div></td>
            <td><div class="clip"><div class="cell">root</div></div></td>
            <td></td>
            <td><div class="clip"><div class="cell">${cmd}</div>${id === 59 ? html`<span class="mark"></span>` : nothing}</div></td>
            <td></td>
            <td><div class="clip"><div class="cell">${source}</div></div></td>
          </tr>`)}</tbody>
      </table></div>
      <div class="gutter"><div class="cap"></div><div class="thumb"></div></div>
      <div class="columns"><button>${pic(18, 14, svg`<path d="M2 0v14M7 0v14M12 0v14M17 0v14" stroke="#7f8c8d" stroke-width="1.400"/>`)}<span>设置列</span></button></div>`;
  }
}

@customElement("detail-panel")
class DetailPanel extends LitElement {
  static styles = [base, css`
    :host { display: flex; flex-direction: column; flex: 1; border: 1px solid #d4d4d4; border-right-width: 2px; border-left-width: 2px; background: #fff; }
    header { display: flex; align-items: center; height: 60px; padding: 0 15px 0 23px; gap: 27px; border-bottom: 2px solid #d9d9d9; }
    h2 { margin: 0 auto 0 0; padding-top: 2px; font-size: 21px; line-height: 30px; font-weight: 700; }
    header button { display: flex; }
    dl { margin: 0; padding: 9px 23px; }
    .line { display: flex; align-items: center; gap: 7px; height: 37px; }
    dt { font-size: 18px; font-weight: 300; }
    dd { margin: 0; font-size: 21px; }
  `];
  render() {
    const rows = [["用户名", "root"], ["命令", "lxc-attach 110"], ["源文件", "pve(7TOLBS-zH0p-8dcC-IiWJ-jItU-1xT3-mo06Sc)/分区1/root/.bash_history"], ["已删除", "否"]];
    return html`<header><h2>详细信息</h2>
        <button aria-label="设置">${pic(28, 28, svg`<path d="M11.500 4.200Q11.500 1 14 1t2.500 3.200l2.700 1.100q2.200-2.200 4-.4t-.4 4l1.100 2.700Q27 11.500 27 14t-3.100 2.500l-1.100 2.700q2.200 2.200.4 4t-4-.4l-2.700 1.100Q16.500 27 14 27t-2.500-3.100l-2.700-1.100q-2.200 2.200-4 .4t.4-4l-1.100-2.700Q1 16.500 1 14t3.100-2.500l1.100-2.700q-2.200-2.200-.4-4t4 .4z" stroke="#888" stroke-width="1.400"/><circle cx="14" cy="14" r="4.500" stroke="#888" stroke-width="1.400"/>`)}</button>
        <button aria-label="预览位置">${splitView("#888")}</button>
        <button aria-label="关闭">${pic(24, 24, svg`<path d="M2 2l20 20M22 2L2 22" stroke="#888" stroke-width="1.600"/>`)}</button>
      </header>
      <dl>${rows.map(([k, v]) => html`<div class="line"><dt>${k}：</dt><dd>${v}</dd></div>`)}</dl>`;
  }
}

@customElement("app-root")
class AppRoot extends LitElement {
  static styles = [base, css`
    :host { display: flex; height: 100vh; background: #f7f7f7; position: relative; overflow: hidden; }
    .page { display: flex; flex-direction: column; flex: 1; min-width: 0; }
    .work { display: flex; flex: 1; min-height: 0; }
    main { display: flex; flex-direction: column; flex: 1; min-width: 0; padding: 12px 11px 18px 15px; }
    .bar { display: flex; align-items: center; height: 54px; margin-bottom: 12px; padding: 0 18px 0 3px; background: #fff; flex: none; }
    .one { display: flex; align-items: center; justify-content: center; width: 74px; height: 48px; background: #e0e0e0; border-radius: 6px; }
    .pill { display: flex; align-items: center; height: 38px; margin-left: 8px; padding: 0 14px 0 20px; border-radius: 6px; background: #6554ee; color: #fff; font: 600 20px/28px "Noto Sans", sans-serif; gap: 8px; }
    .pill button { margin-left: 5px; }
    .search { display: flex; align-items: center; width: 393px; height: 42px; margin: 0 26px 0 auto; padding: 0 20px 0 16px; border: 2px solid #999; border-radius: 6px; }
    .search input { flex: 1; min-width: 0; border: 0; outline: 0; padding: 0; font-size: 24px; font-weight: 300; }
    .search input::placeholder { color: #8f8f8f; opacity: 1; }
    .more { display: flex; align-items: center; gap: 5px; font-size: 23px; line-height: 32px; font-weight: 300; }
    result-grid { margin-bottom: 27px; }
    .usb { position: absolute; right: 0; top: 1189px; display: flex; align-items: center; justify-content: center; width: 42px; height: 60px; background: #444; border-radius: 2px 0 0 2px; box-shadow: 0 0 6px #555; }
  `];
  render() {
    return html`<nav-rail></nav-rail>
      <div class="page"><top-bar></top-bar>
        <div class="work">
          <evidence-tree></evidence-tree>
          <node-list></node-list>
          <main>
            <div class="bar">
              <button class="one" aria-label="第一组">${pic(28, 28, svg`<rect x="1.500" y="1.500" width="25" height="25" rx="2" stroke="#222" stroke-width="3"/><path d="M10 8.500h5V21" stroke="#222" stroke-width="3"/>`)}</button>
              <div class="pill">${pic(20, 20, svg`<path d="M7 1v18L1 12.500M13 19V1l6 6.500" stroke="#fff" stroke-width="1.500"/>`)}<span>Time</span>${pic(16, 18, svg`<path d="M8 2v15M2 8l6-6 6 6" stroke="#fff" stroke-width="2"/>`)}
                <button aria-label="移除">${pic(24, 24, svg`<circle cx="12" cy="12" r="11.500" fill="#fff"/><path d="M7.500 7.500l9 9m0-9l-9 9" stroke="#6554ee" stroke-width="2"/>`)}</button></div>
              <label class="search"><input aria-label="在历史命令中搜索" placeholder="在 历史命令 中搜索" />${magnifier(28)}</label>
              <button class="more">${pic(30, 30, svg`<ellipse cx="13" cy="6" rx="12" ry="5.500" fill="#222"/><path d="M1 10c2 3 5 4 9 4.500L8 18c-4-.5-7-2-7-4zM1 17c1 2 3 3 6 3.500l1 4.500c-4-1-7-2-7-4zM2 24c2 2 5 3 8 3l4 2.500C7 30 2 28 2 24z" fill="#222"/><circle cx="18.500" cy="19.500" r="6.500" stroke="#222" stroke-width="3"/><path d="M23 24l5.500 5.500" stroke="#222" stroke-width="3"/>`)}<span>高级</span></button>
            </div>
            <result-grid></result-grid>
            <detail-panel></detail-panel>
          </main>
        </div>
      </div>
      <button class="usb" aria-label="设备">${pic(24, 32, svg`<path d="M2.500 7h19v13c0 7-5 10.500-9.500 10.500S2.500 27 2.500 20zM5.500 7V2h13v5M8 4.500h3M13 4.500h3" stroke="#ffa31f" stroke-width="2"/>`)}</button>`;
  }
}
